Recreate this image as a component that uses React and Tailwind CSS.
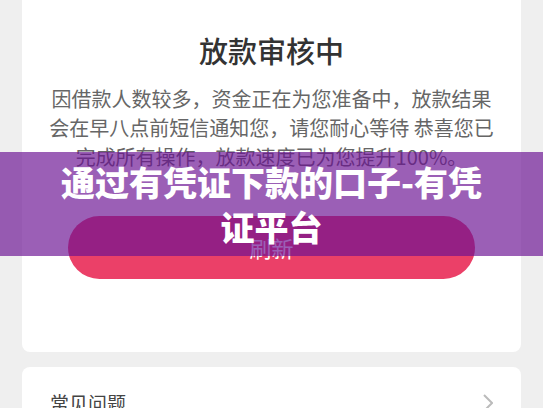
import React from 'react';

const font = { fontFamily: '"Noto Sans CJK SC", "Noto Sans", sans-serif' };

const App = () => {
    return (
        <div className="relative h-[408px] w-[543px] overflow-hidden bg-[#efefef] px-[22px]" style={font}>
            <div className="-mt-[60px] rounded-[8px] bg-white pt-[3px] pb-[73px]">
                <div className="flex justify-center">
                    <svg width="56" height="56" viewBox="0 0 56 56" className="ml-[50px]">
                        <circle cx="28" cy="28" r="28" fill="#f8f3dc" />
                    </svg>
                </div>
                <h1 className="mt-[31px] text-center text-[29px] font-medium leading-[40px] text-[#333]">放款审核中</h1>
                <p className="mt-[14px] px-[20px] text-center text-[20px] leading-[29px] text-[#666]">
                    <span className="block">因借款人数较多，资金正在为您准备中，放款结果</span>
                    <span className="block">会在早八点前短信通知您，请您耐心等待 恭喜您已</span>
                    <span className="block">完成所有操作，放款速度已为您提升100%。</span>
                </p>
                <button className="mx-[46px] mt-[45px] flex h-[63px] w-[407px] items-center justify-center rounded-full bg-[#eb4068] text-[22px] text-white">
                    刷新
                </button>
            </div>
            <div className="mt-[15px] flex items-center justify-between rounded-[8px] bg-white px-[28px] pt-[22px] pb-[20px]">
                <span className="text-[19px] leading-[28px] text-[#444]">常见问题</span>
                <svg width="10" height="18" viewBox="0 0 10 18">
                    <path d="M1 1l8 8-8 8" fill="none" stroke="#bbb" strokeWidth="2" />
                </svg>
            </div>
            <div className="absolute inset-x-0 top-[152px] flex h-[104px] items-center justify-center bg-[rgba(106,16,146,0.67)] px-[50px]">
                <p className="text-center text-[34px] font-black leading-[45px] text-white">通过有凭证下款的口子-有凭证平台</p>
            </div>
        </div>
    );
};

export default App;
